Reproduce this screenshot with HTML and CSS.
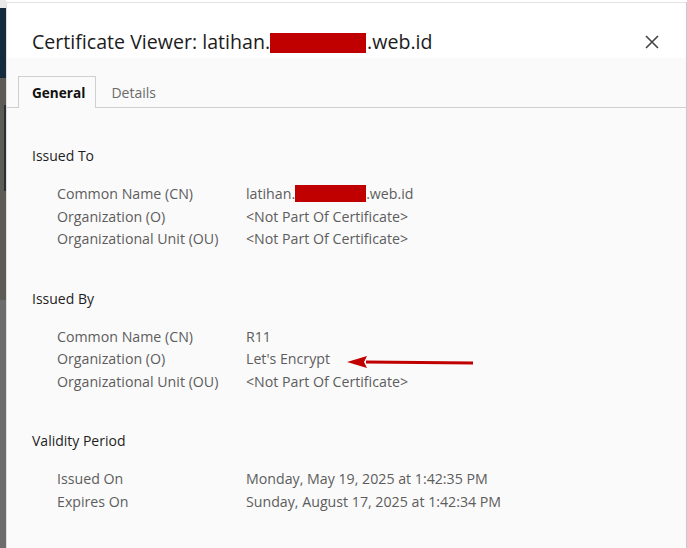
FILE: index.html
```html
<!DOCTYPE html>
<html lang="en">

<head>
    <meta charset="UTF-8" />
    <meta name="viewport" content="width=device-width, initial-scale=1.0" />
    <title>Certificate Viewer</title>
    <link rel="stylesheet" href="styles.css">
</head>

<body>
    <div class="screen">
        <!-- kúsok stránky za dialógom -->
        <div class="backdrop">
            <div class="bd-top"></div>
            <div class="bd-nav"></div>
            <div class="bd-mid"><span class="bd-bar"></span></div>
            <div class="bd-low"></div>
        </div>

        <div class="dialog">
            <header class="dialog-head">
                <h1 class="dialog-title">Certificate Viewer: latihan.<span class="redact redact-title"></span>.web.id</h1>
                <button type="button" class="close-btn" aria-label="Close">
                    <svg width="14" height="14" viewBox="0 0 14 14">
                        <path d="M1 1 L13 13 M13 1 L1 13" stroke="#444" stroke-width="1.6" fill="none" />
                    </svg>
                </button>
            </header>

            <div class="dialog-body">
                <div class="tabs">
                    <div class="tab active">General</div>
                    <div class="tab">Details</div>
                </div>

                <div class="content">
                    <section class="cert-section">
                        <h2>Issued To</h2>
                        <div class="fields">
                            <span class="label">Common Name (CN)</span>
                            <span class="value">latihan.<span class="redact redact-value"></span>.web.id</span>
                            <span class="label">Organization (O)</span>
                            <span class="value">&lt;Not Part Of Certificate&gt;</span>
                            <span class="label">Organizational Unit (OU)</span>
                            <span class="value">&lt;Not Part Of Certificate&gt;</span>
                        </div>
                    </section>

                    <section class="cert-section">
                        <h2>Issued By</h2>
                        <div class="fields">
                            <span class="label">Common Name (CN)</span>
                            <span class="value">R11</span>
                            <span class="label">Organization (O)</span>
                            <span class="value">Let's Encrypt</span>
                            <span class="label">Organizational Unit (OU)</span>
                            <span class="value">&lt;Not Part Of Certificate&gt;</span>
                        </div>
                    </section>

                    <section class="cert-section">
                        <h2>Validity Period</h2>
                        <div class="fields">
                            <span class="label">Issued On</span>
                            <span class="value">Monday, May 19, 2025 at 1:42:35 PM</span>
                            <span class="label">Expires On</span>
                            <span class="value">Sunday, August 17, 2025 at 1:42:34 PM</span>
                        </div>
                    </section>
                </div>

                <!-- šípka z anotácie -->
                <svg class="annot-arrow" width="130" height="16" viewBox="0 0 130 16">
                    <path d="M20 8 L127 9" stroke="#c00000" stroke-width="3" fill="none" />
                    <path d="M1 8 L21 2 L18 8 L21 14 Z" fill="#c00000" />
                </svg>
            </div>
        </div>
    </div>
</body>

</html>
```

FILE: styles.css
```css
:root {
    --text: #1e1e1e;
    --muted: #5d5d5d;
    --line: #cfcfcf;
    --panel: #fafafa;
    --redact: #c00000;
}

* {
    box-sizing: border-box;
}

body {
    margin: 0;
    font-family: "Open Sans", "Noto Sans", Arial, sans-serif;
    background: #ffffff;
    color: var(--text);
}

.screen {
    display: flex;
    width: 687px;
    height: 548px;
    overflow: hidden;
}

.backdrop {
    width: 6px;
    display: flex;
    flex-direction: column;
}

.bd-top {
    height: 8px;
    background: #e9e9e9;
}

.bd-nav {
    height: 70px;
    background: #152a3d;
}

.bd-mid {
    height: 222px;
    background: #5c5b56;
    position: relative;
}

.bd-bar {
    position: absolute;
    left: 4px;
    top: 27px;
    width: 2px;
    height: 86px;
    background: #2e2e2e;
}

.bd-low {
    flex: 1;
    background: #6c6c6c;
}

.dialog {
    flex: 1;
    margin-top: 2px;
    border-top: 1px solid #e2e2e2;
    border-left: 1px solid #dedede;
    border-right: 1px solid #c9c9c9;
    background: var(--panel);
    display: flex;
    flex-direction: column;
}

.dialog-head {
    height: 55px;
    background: #ffffff;
    display: flex;
    align-items: flex-end;
    justify-content: space-between;
    padding: 0 27px 0 25px;
}

.dialog-title {
    margin: 0;
    font-size: 19.6px;
    font-weight: 400;
    line-height: 26px;
    padding-bottom: 3px;
    color: #1c1c1c;
    white-space: nowrap;
}

.redact {
    display: inline-block;
    background: var(--redact);
    vertical-align: baseline;
}

.redact-title {
    width: 96px;
    height: 20px;
    margin: 0 1px -4px 0;
}

.redact-value {
    width: 71px;
    height: 17px;
    margin-bottom: -3px;
}

.close-btn {
    border: none;
    background: none;
    padding: 0;
    margin-bottom: 9px;
    cursor: pointer;
    display: flex;
}

.dialog-body {
    flex: 1;
    position: relative;
}

.tabs {
    display: flex;
    margin-top: 18px;
    padding-left: 11px;
    border-bottom: 1px solid var(--line);
}

.tab {
    height: 31px;
    padding: 0 14px;
    font-size: 14px;
    line-height: 31px;
    color: #6a6a6a;
    border: 1px solid transparent;
    border-bottom: none;
    margin-bottom: -1px;
}

.tab.active {
    color: #111;
    font-weight: 700;
    font-size: 13.6px;
    padding: 0 10px 0 13px;
    border-color: var(--line);
    background: var(--panel);
    height: 32px;
}

.content {
    padding: 38px 25px 0;
    display: flex;
    flex-direction: column;
    gap: 38px;
}

.cert-section h2 {
    margin: 0 0 17px;
    font-size: 14px;
    font-weight: 400;
    line-height: 20px;
    color: var(--text);
}

.fields {
    display: grid;
    grid-template-columns: 189px 1fr;
    padding-left: 25px;
    font-size: 14.2px;
    line-height: 22.5px;
    color: var(--muted);
}

.annot-arrow {
    position: absolute;
    left: 339px;
    top: 296px;
}
```
